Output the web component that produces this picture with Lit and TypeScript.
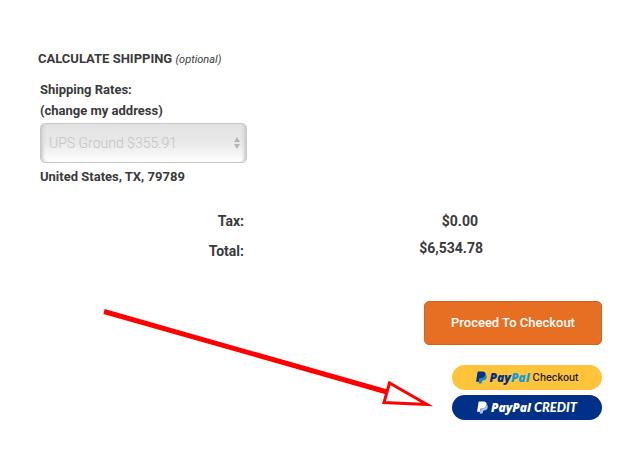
import { LitElement, html, css, svg } from "lit";
import { customElement, property } from "lit/decorators.js";

const FRONT_P =
  "M7.076 20.500H1.800a.641.641 0 0 1-.633-.74L4.144.901C4.226.382 4.674 0 5.198 0h8.260c2.57 0 4.578.543 5.69 1.81 1.01 1.15 1.304 2.42 1.012 4.287-.023.143-.047.288-.077.437-.983 5.05-4.349 6.797-8.647 6.797h-2.19c-.524 0-.968.382-1.05.9z";
const BACK_P =
  "M20.6 5.500c-.93 5.2-4.005 7.831-9.138 7.831h-2.19l-2.200 7.170-.746 2.852a.56.56 0 0 0 .554.647h4.682c.46 0 .85-.334.922-.788.06-.26.76-4.152.816-4.390a.932.932 0 0 1 .923-.788h.58c3.76 0 6.705-1.528 7.565-5.946.36-2.547.174-5.088-1.777-6.571z";

@customElement("paypal-button")
export class PaypalButton extends LitElement {
  @property({ reflect: true }) kind: "checkout" | "credit" = "checkout";

  static styles = css`
    :host {
      display: block;
      width: 150px;
    }
    .pill {
      display: flex;
      align-items: center;
      justify-content: center;
      width: 100%;
      height: 25px;
      padding: 0;
      border: 0;
      border-radius: 13px;
      background: #ffc439;
      color: #111;
      font: 500 10px/25px Inter, "Liberation Sans", sans-serif;
      cursor: pointer;
    }
    .mark {
      width: 11px;
      height: 13px;
      margin-right: 3px;
    }
    .front {
      fill: #003087;
    }
    .back {
      fill: #0f8fd6;
    }
    .brand {
      margin-right: 3px;
      color: #003087;
      font: italic 800 12px/25px "Open Sans", sans-serif;
    }
    .pal {
      color: #109cde;
    }
    :host([kind="credit"]) .pill {
      background: #003087;
      color: #fff;
    }
    :host([kind="credit"]) .front {
      fill: #fff;
    }
    :host([kind="credit"]) .back {
      fill: #b3c1dc;
    }
    :host([kind="credit"]) .brand,
    :host([kind="credit"]) .pal {
      color: #fff;
    }
    .credit {
      font: italic 900 13px/25px Lato, sans-serif;
    }
  `;

  render() {
    return html`<button class="pill" type="button">
      <svg class="mark" viewBox="1 0 22 24" aria-hidden="true">
        ${svg`<path class="back" d=${BACK_P} /><path class="front" d=${FRONT_P} />`}
      </svg>
      <span class="brand">Pay<span class="pal">Pal</span></span>
      ${this.kind === "credit"
        ? html`<span class="credit">CREDIT</span>`
        : html`<span>Checkout</span>`}
    </button>`;
  }
}

@customElement("app-root")
export class AppRoot extends LitElement {
  static styles = css`
    :host {
      display: block;
      position: relative;
      box-sizing: border-box;
      min-height: 100vh;
      padding: 48px 36px;
      background: #fff;
      color: #3a3a3a;
      font: 700 14px/21px Roboto, sans-serif;
    }
    .title {
      margin: 0 2px 9px;
      font-size: 13px;
      font-weight: 700;
      line-height: 21px;
    }
    .hint {
      font-size: 11px;
      font-weight: 400;
    }
    .rates {
      display: flex;
      flex-direction: column;
      align-items: flex-start;
      padding: 0 4px;
      font-size: 13px;
    }
    .address {
      color: inherit;
      text-decoration: none;
    }
    .picker {
      position: relative;
      width: 207px;
      max-width: 100%;
      margin: 2px 0 3px;
    }
    .select {
      display: block;
      box-sizing: border-box;
      width: 100%;
      height: 40px;
      padding: 0 8px;
      appearance: none;
      border: 1px solid #c8c8c8;
      border-radius: 5px;
      background: linear-gradient(#e2e2e2, #e9e9e9 50%, #fff);
      box-shadow:
        inset 4px 0 3px -2px #ccc,
        inset -4px 0 3px -2px #ccc;
      color: #c4c4c4;
      font: 300 14px/20px Roboto, sans-serif;
      opacity: 1;
    }
    .arrows {
      position: absolute;
      top: 14px;
      right: 6px;
      width: 8px;
      height: 12px;
      fill: #b4b4b4;
      pointer-events: none;
    }
    .totals {
      width: 100%;
      margin-top: 24px;
      border-collapse: collapse;
    }
    .label,
    .amount {
      height: 30px;
      padding: 0;
      font-weight: 700;
      line-height: 21px;
      text-align: right;
      vertical-align: top;
    }
    .label {
      width: 208px;
    }
    .amount {
      padding-right: 124px;
    }
    .sum .amount {
      padding-right: 119px;
    }
    .sum .label {
      padding-top: 3px;
    }
    .tax .label,
    .tax .amount {
      height: 27px;
    }
    .actions {
      display: flex;
      flex-direction: column;
      align-items: flex-end;
      gap: 5px;
      margin-top: 30px;
    }
    .proceed {
      width: 178px;
      height: 44px;
      margin-bottom: 15px;
      padding: 0;
      border: 1px solid #cf6420;
      border-radius: 5px;
      background: #e76f24;
      color: #fff;
      font: 500 13px/20px Roboto, sans-serif;
      cursor: pointer;
    }
    .pointer {
      position: absolute;
      top: 300px;
      right: 200px;
      width: 338px;
      height: 110px;
      fill: none;
      stroke: #f00;
      pointer-events: none;
    }
  `;

  render() {
    return html`
      <h2 class="title">CALCULATE SHIPPING <em class="hint">(optional)</em></h2>
      <section class="rates">
        <label for="rate">Shipping Rates:</label>
        <a class="address" href="#address">(change my address)</a>
        <div class="picker">
          <select class="select" id="rate" disabled>
            <option>UPS Ground $355.91</option>
          </select>
          <svg class="arrows" viewBox="0 0 8 12" aria-hidden="true">
            <path d="M4 0 7 5H1zM4 12 7 7H1z" />
          </svg>
        </div>
        <span>United States, TX, 79789</span>
      </section>
      <table class="totals">
        <tr class="tax">
          <th class="label" scope="row">Tax:</th>
          <td class="amount">$0.00</td>
        </tr>
        <tr class="sum">
          <th class="label" scope="row">Total:</th>
          <td class="amount">$6,534.78</td>
        </tr>
      </table>
      <div class="actions">
        <button class="proceed" type="button">Proceed To Checkout</button>
        <paypal-button kind="checkout"></paypal-button>
        <paypal-button kind="credit"></paypal-button>
      </div>
      <svg class="pointer" viewBox="100 300 338 110" aria-hidden="true">
        <path stroke-width="5" d="M104 311.500 387 392" />
        <path stroke-width="3" stroke-miterlimit="10" d="M389.500 383 384 402.500 427 404.500z" />
      </svg>
    `;
  }
}
